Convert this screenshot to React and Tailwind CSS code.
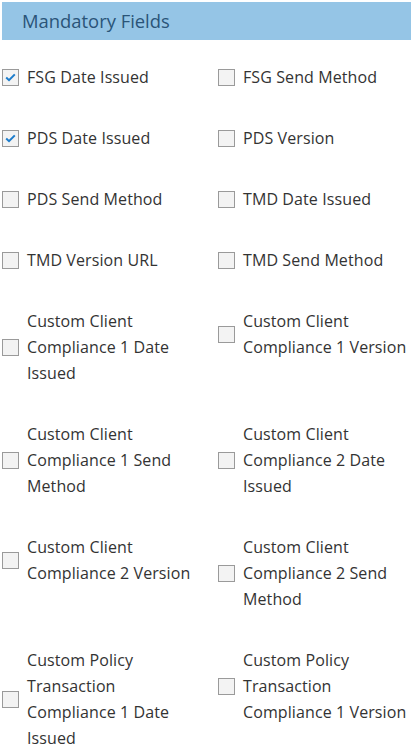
import React from "react";

const rows = [
  [["FSG Date Issued", true], ["FSG Send Method", false]],
  [["PDS Date Issued", true], ["PDS Version", false]],
  [["PDS Send Method", false], ["TMD Date Issued", false]],
  [["TMD Version URL", false], ["TMD Send Method", false]],
  [["Custom Client Compliance 1 Date Issued", false], ["Custom Client Compliance 1 Version", false]],
  [["Custom Client Compliance 1 Send Method", false], ["Custom Client Compliance 2 Date Issued", false]],
  [["Custom Client Compliance 2 Version", false], ["Custom Client Compliance 2 Send Method", false]],
  [["Custom Policy Transaction Compliance 1 Date Issued", false], ["Custom Policy Transaction Compliance 1 Version", false]],
];

function Box({ checked }) {
  return (
    <span className="flex-none w-[17px] h-[17px] border border-[#9a9a9a] bg-[#f3f3f3] flex items-center justify-center">
      {checked && (
        <svg width="11" height="9" viewBox="0 0 11 9">
          <path d="M1.2 4.6 L4 7.2 L9.8 1.4" fill="none" stroke="#1b7ccc" strokeWidth="2" />
        </svg>
      )}
    </span>
  );
}

function Item({ label, checked }) {
  return (
    <label className="flex items-center gap-[8px]">
      <Box checked={checked} />
      <span className="text-[16px] leading-[26px] tracking-[0.1px] text-[#333333]">{label}</span>
    </label>
  );
}

export default function App() {
  return (
    <div className="w-[411px] h-[746px] overflow-hidden bg-white" style={{ fontFamily: '"Open Sans", sans-serif' }}>
      <div className="ml-[2px] mt-[2px] h-[38px] bg-[#95c5e6] flex items-center pl-[20px]">
        <span className="text-[18.4px] text-[#2a5478]">Mandatory Fields</span>
      </div>
      <div className="mt-[24px] pl-[2px] grid grid-cols-[216px_1fr] gap-y-[35px]">
        {rows.map((r, i) => (
          <React.Fragment key={i}>
            <div className="pr-[24px]"><Item label={r[0][0]} checked={r[0][1]} /></div>
            <div className="pr-[2px]"><Item label={r[1][0]} checked={r[1][1]} /></div>
          </React.Fragment>
        ))}
      </div>
    </div>
  );
}
